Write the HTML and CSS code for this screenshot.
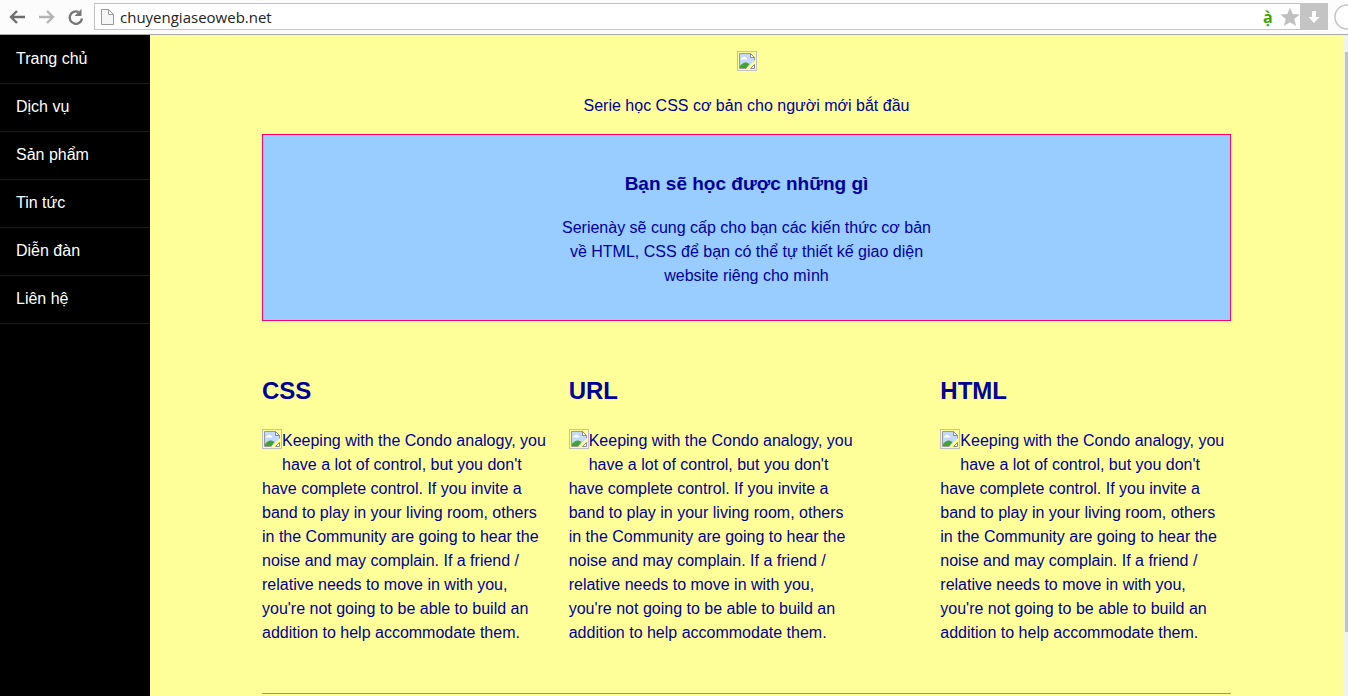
FILE: index.html
```
<!DOCTYPE html>
<html lang="vi">
<head>
<meta charset="utf-8">
<title>chuyengiaseoweb.net</title>
<link rel="stylesheet" href="styles.css">
</head>
<body>
<svg width="0" height="0" class="defs" aria-hidden="true">
  <symbol id="broken" viewBox="0 0 20 20">
    <rect x=".5" y=".5" width="19" height="19" fill="none" stroke="#c0c0c0"/>
    <path d="M2.500 2.500h11l4 4v5L11 17.500H2.500z" fill="#c3d9f7" stroke="#9a9a9a"/>
    <path d="M4 8.500q0-2 1.800-2 1.400-2 2.800 0 1.600 0 1.600 2z" fill="#fff"/>
    <path d="M3 17v-2q3-4 6.500-3.500l3 1.500L9.500 17z" fill="#43a235"/>
    <path d="M13.500 2.500v4h4z" fill="#fff" stroke="#8a8a8a"/>
    <path d="M18 9v3L12.500 18H9l3-3z" fill="#ffff99"/>
    <path d="M13.500 17.500h4v-4z" fill="#fff" stroke="#8a8a8a"/>
  </symbol>
</svg>
<header class="toolbar">
  <button class="tool" aria-label="Back"><svg width="20" height="20" viewBox="0 0 20 20" fill="none" stroke="#6e6e6e" stroke-width="2.400"><path d="M18 10H4M10 4l-6 6 6 6"/></svg></button>
  <button class="tool" aria-label="Forward"><svg width="20" height="20" viewBox="0 0 20 20" fill="none" stroke="#b4b4b4" stroke-width="2.400"><path d="M3 10h14M11 4l6 6-6 6"/></svg></button>
  <button class="tool" aria-label="Reload"><svg width="20" height="20" viewBox="0 0 20 20"><path d="M13.500 5A6.200 6.200 0 1 0 17 11.500" fill="none" stroke="#777" stroke-width="2.400"/><path d="M16.500 2v7h-7z" fill="#777"/></svg></button>
  <div class="address">
    <svg width="13" height="16" viewBox="0 0 13 16" fill="#f6f6f6" stroke="#999"><path d="M.5.5h7l5 5v10H.5zM7.500.5v5h5"/></svg>
    <input class="url" type="text" aria-label="Address" value="chuyengiaseoweb.net">
    <span class="lang">ạ̀</span>
    <button class="star" aria-label="Bookmark"><svg width="20" height="20" viewBox="0 0 20 20"><path d="M10 .5l2.700 6.500 7 .5-5.400 4.500 1.800 7L10 15.200 3.900 19l1.800-7L.3 7.500l7-.5z" fill="#c0c0c0"/></svg></button>
    <button class="download" aria-label="Download"><svg width="12" height="12" viewBox="0 0 12 12"><path d="M4 0h4v6h3.500L6 12 .5 6H4z" fill="#fff"/></svg></button>
  </div>
  <button class="round" aria-label="Extension"><svg width="26" height="26" viewBox="0 0 26 26"><circle cx="13" cy="13" r="12" fill="#fff" stroke="#c4c4c4" stroke-width="1.500"/></svg></button>
</header>
<div class="page">
  <nav class="sidebar">
    <a href="#">Trang chủ</a>
    <a href="#">Dịch vụ</a>
    <a href="#">Sản phẩm</a>
    <a href="#">Tin tức</a>
    <a href="#">Diễn đàn</a>
    <a href="#">Liên hệ</a>
  </nav>
  <main class="main">
    <div class="banner"><svg class="picture" role="img"><use href="#broken"/></svg></div>
    <p class="tagline">Serie học CSS cơ bản cho người mới bắt đầu</p>
    <section class="intro">
      <h3>Bạn sẽ học được những gì</h3>
      <p>Serienày sẽ cung cấp cho bạn các kiến thức cơ bản về HTML, CSS để bạn có thể tự thiết kế giao diện website riêng cho mình</p>
    </section>
    <div class="columns">
      <article class="column">
        <h2>CSS</h2>
        <svg class="picture thumb" role="img"><use href="#broken"/></svg>
        <p>Keeping with the Condo analogy, you have a lot of control, but you don't have complete control. If you invite a band to play in your living room, others in the Community are going to hear the noise and may complain. If a friend / relative needs to move in with you, you're not going to be able to build an addition to help accommodate them.</p>
      </article>
      <article class="column">
        <h2>URL</h2>
        <svg class="picture thumb" role="img"><use href="#broken"/></svg>
        <p>Keeping with the Condo analogy, you have a lot of control, but you don't have complete control. If you invite a band to play in your living room, others in the Community are going to hear the noise and may complain. If a friend / relative needs to move in with you, you're not going to be able to build an addition to help accommodate them.</p>
      </article>
      <article class="column">
        <h2>HTML</h2>
        <svg class="picture thumb" role="img"><use href="#broken"/></svg>
        <p>Keeping with the Condo analogy, you have a lot of control, but you don't have complete control. If you invite a band to play in your living room, others in the Community are going to hear the noise and may complain. If a friend / relative needs to move in with you, you're not going to be able to build an addition to help accommodate them.</p>
      </article>
    </div>
    <footer class="footer"></footer>
  </main>
  <div class="scrollbar"><div class="thumb-bar"></div></div>
</div>
</body>
</html>
```
FILE: styles.css
```
* { box-sizing: border-box; }
body {
  margin: 0;
  height: 100vh;
  display: flex;
  flex-direction: column;
  overflow: hidden;
  background: #ffff99;
  color: #000099;
  font: 16px/24px "Liberation Sans", Arial, sans-serif;
}
button {
  display: flex;
  align-items: center;
  justify-content: center;
  flex: none;
  padding: 0;
  border: 0;
  background: none;
}
h2, h3, p { margin: 0; }
.defs { position: absolute; }

.toolbar {
  display: flex;
  flex: none;
  align-items: center;
  padding: 3px 0 4px 7px;
  overflow: hidden;
  background: #fcfcfc;
  border-bottom: 1px solid #a8a8a8;
}
.tool { width: 20px; margin-right: 9px; }
.address {
  display: flex;
  flex: 1;
  align-items: center;
  height: 27px;
  padding-left: 6px;
  border: 1px solid #c4c4c4;
  background: #fff;
}
.url {
  flex: 1;
  min-width: 0;
  padding: 0 6px;
  border: 0;
  outline: 0;
  background: none;
  color: #222;
  font: 15px/24px "Open Sans", sans-serif;
}
.lang {
  width: 17px;
  color: #3fa30a;
  font: bold 16px/24px "Open Sans", sans-serif;
}
.download {
  width: 27px;
  height: 27px;
  background: #c4c4c4;
}
.round { width: 14px; margin-left: 6px; justify-content: flex-start; }
.round svg { flex: none; }

.page { display: flex; flex: 1; min-height: 0; }
.sidebar { flex: none; width: 150px; padding-top: 1px; background: #000; }
.sidebar a {
  display: block;
  padding: 11px 16px 12px;
  border-bottom: 1px solid #0000ff;
  color: #fff;
  text-decoration: none;
}
.main { flex: 1; padding: 16px 112px 0; overflow: hidden; }
.picture { display: block; width: 20px; height: 20px; }
.banner { display: flex; justify-content: center; }
.tagline { padding: 23px 0 16px; text-align: center; }
.intro {
  padding: 35px 16px 32px;
  border: 1px solid #ff0066;
  background: #99ccff;
  text-align: center;
}
.intro h3 { font-size: 19px; line-height: 28px; }
.intro p { width: 40%; margin: 18px auto 0; }
.columns { display: flex; gap: 16px; padding: 52px 0 48px; }
.column { width: 30%; }
.column:last-child { margin-left: auto; }
.column h2 { margin-bottom: 20px; font-size: 24px; line-height: 36px; }
.thumb { float: left; margin-bottom: 8px; }
.footer { border-top: 1px solid #00ff00; }

.scrollbar { flex: none; width: 5px; padding: 17px 0 0 2px; background: #f1f1f1; }
.thumb-bar { height: 90%; background: #c1c1c1; }
```
